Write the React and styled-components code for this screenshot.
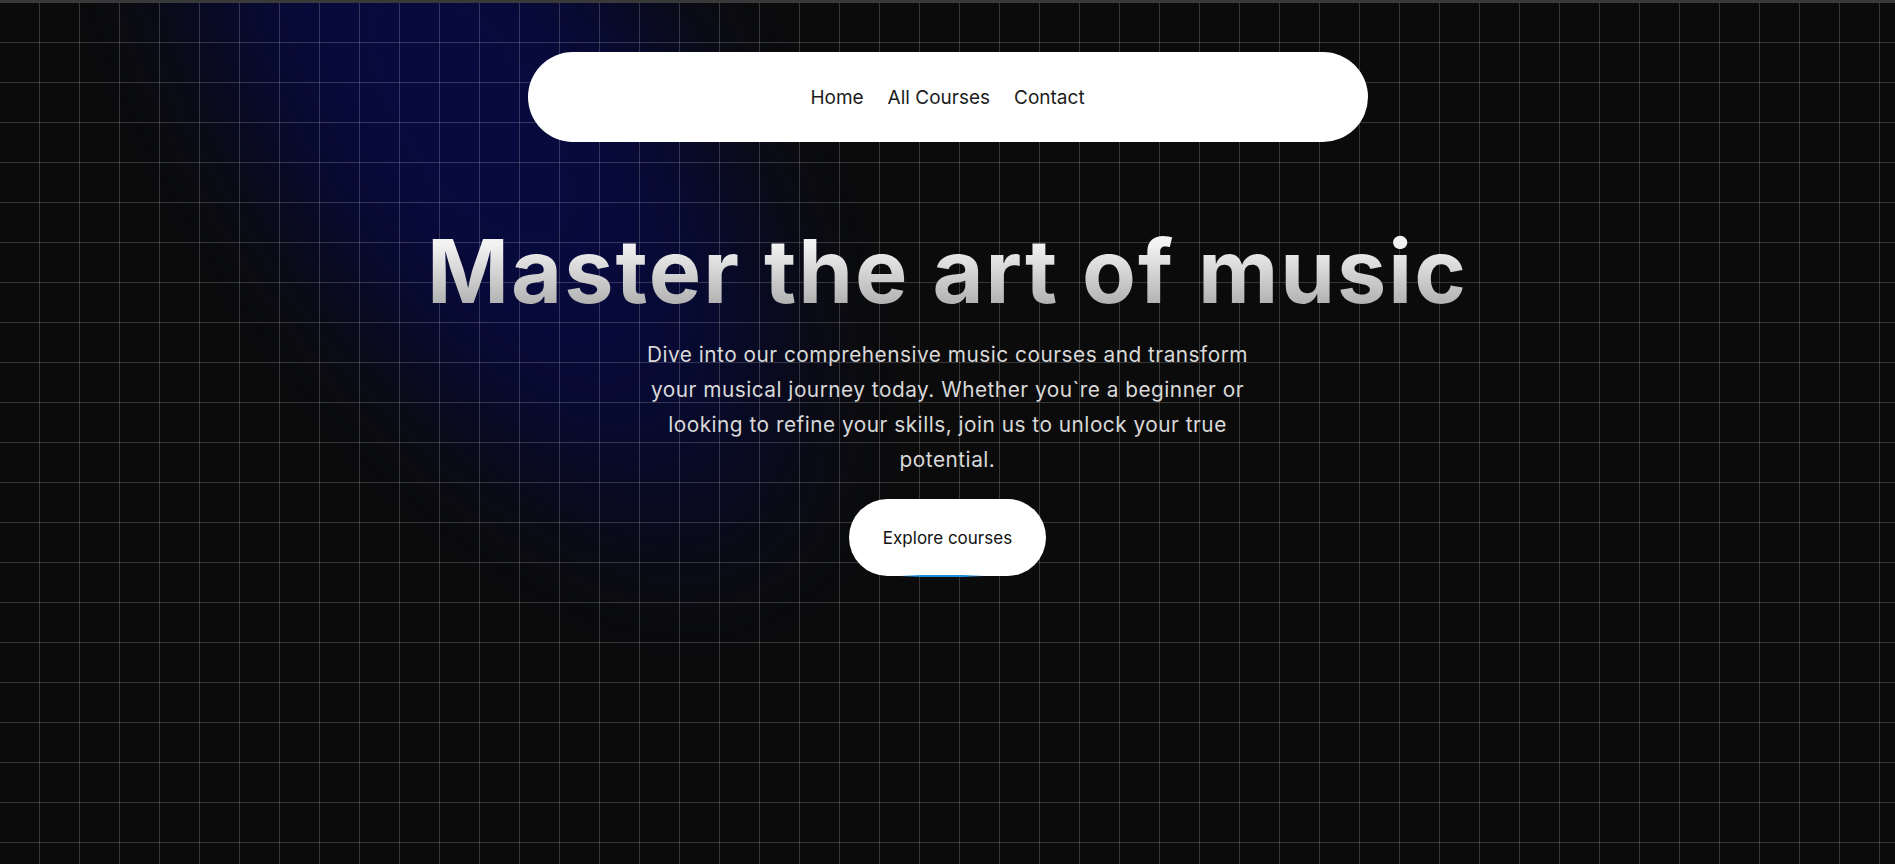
import React from 'react';
import styled, { createGlobalStyle } from 'styled-components';

const GlobalStyle = createGlobalStyle`
    html, body {
        margin: 0;
        background: #0b0b0b;
    }
    body {
        font-family: Inter, "Noto Sans", sans-serif;
    }
`;

const Page = styled.div`
    position: relative;
    min-height: 864px;
    box-sizing: border-box;
    border-top: 3px solid #393939;
    background: #0b0b0b;
    overflow: hidden;
    padding-top: 49px;

    /* blue glow */
    &::before {
        content: '';
        position: absolute;
        width: 500px;
        height: 1120px;
        left: 220px;
        top: -450px;
        background: radial-gradient(ellipse at center, rgba(6, 10, 70, 0.92) 0%, rgba(6, 10, 66, 0.82) 40%, rgba(6, 8, 52, 0.45) 60%, transparent 75%);
        transform: rotate(-33deg);
        filter: blur(50px);
        z-index: 0;
    }

    /* grid */
    &::after {
        content: '';
        position: absolute;
        inset: 0;
        background-image:
            linear-gradient(to right, transparent 39px, rgba(255, 255, 255, 0.18) 39px),
            linear-gradient(to bottom, transparent 39px, rgba(255, 255, 255, 0.18) 39px);
        background-size: 40px 40px;
        z-index: 1;
        pointer-events: none;
    }
`;

const Content = styled.div`
    position: relative;
    z-index: 2;
    display: flex;
    flex-direction: column;
    align-items: center;
`;

const Nav = styled.nav`
    width: 840px;
    height: 90px;
    background: #fff;
    border-radius: 45px;
    display: flex;
    align-items: center;
    justify-content: center;
    gap: 24px;
`;

const NavLink = styled.a`
    font-size: 19px;
    color: #1c1c1c;
    text-decoration: none;
    cursor: pointer;
`;

const Hero = styled.section`
    margin-top: 85px;
    display: flex;
    flex-direction: column;
    align-items: center;
    gap: 22px;
`;

const Title = styled.h1`
    margin: 0;
    font-size: 88px;
    line-height: 1;
    font-weight: 700;
    letter-spacing: 2px;
    background: linear-gradient(to bottom, #f2f2f2 20%, #a6a6a6 100%);
    -webkit-background-clip: text;
    background-clip: text;
    color: transparent;
`;

const Lead = styled.p`
    margin: 0;
    max-width: 640px;
    text-align: center;
    font-size: 20.8px;
    line-height: 35px;
    letter-spacing: 0.5px;
    color: #d9d9d9;
`;

const Button = styled.button`
    position: relative;
    width: 197px;
    height: 77px;
    border: none;
    border-radius: 39px;
    background: #fff;
    color: #111;
    font-family: inherit;
    font-size: 17px;
    cursor: pointer;

    &::after {
        content: '';
        position: absolute;
        left: 50%;
        bottom: -1px;
        width: 84px;
        height: 2px;
        transform: translateX(-56%);
        background: linear-gradient(to right, transparent, #1b8fd6 25%, #1b8fd6 75%, transparent);
    }
`;

export default function App() {
    return (
        <>
            <GlobalStyle />
            <Page>
                <Content>
                    <Nav>
                        <NavLink>Home</NavLink>
                        <NavLink>All Courses</NavLink>
                        <NavLink>Contact</NavLink>
                    </Nav>
                    <Hero>
                        <Title>Master the art of music</Title>
                        <Lead>
                            Dive into our comprehensive music courses and transform your musical journey today. Whether you`re a beginner or looking to refine your skills, join us to unlock your true potential.
                        </Lead>
                        <Button>Explore courses</Button>
                    </Hero>
                </Content>
            </Page>
        </>
    );
}
